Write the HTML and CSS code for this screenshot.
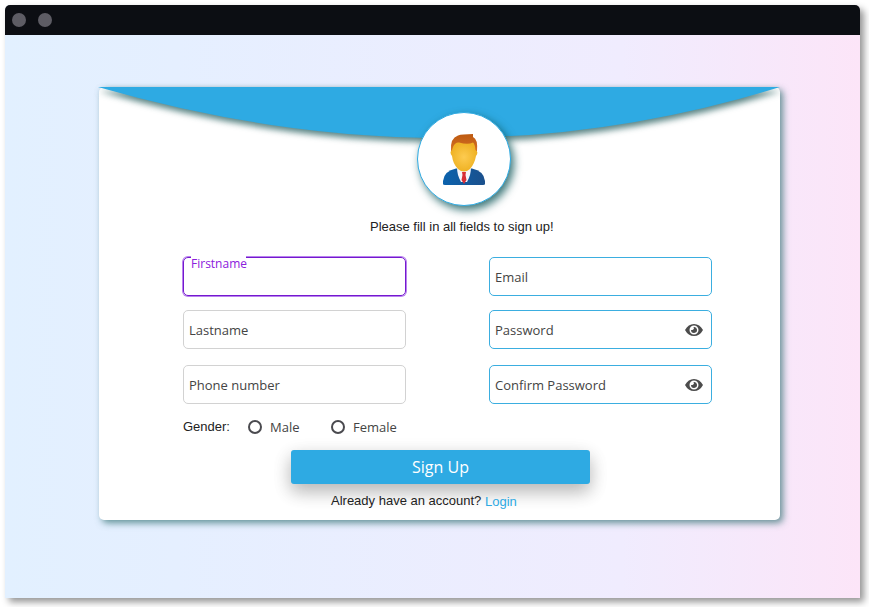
FILE: index.html
```
<!DOCTYPE html>
<html lang="en">
<head>
<meta charset="utf-8">
<title>Sign Up</title>
<link rel="stylesheet" href="styles.css">
</head>
<body>
<div class="window">
  <div class="titlebar"><span class="dot"></span><span class="dot"></span></div>
  <main class="stage">
    <section class="card">
      <svg class="banner" viewBox="0 0 682 60"><path d="M0 0H682Q354 102 0 0Z" fill="#2eaae3"/></svg>
      <div class="avatar">
        <svg viewBox="0 0 44 52" width="44" height="52">
          <defs>
            <radialGradient id="face"><stop offset="0" stop-color="#fdcb50"/><stop offset="1" stop-color="#efb224"/></radialGradient>
            <linearGradient id="suit"><stop offset="0" stop-color="#0b62ad"/><stop offset="1" stop-color="#1b508c"/></linearGradient>
            <linearGradient id="hair" x2="0" y2="1"><stop offset="0" stop-color="#bd5a10"/><stop offset="1" stop-color="#d8732a"/></linearGradient>
          </defs>
          <path d="M1 51V48Q2 38 14 35.500H30Q42 38 43 48V51Q43 52 41 52H3Q1 52 1 51Z" fill="url(#suit)"/>
          <path d="M15 34.500Q15 42 19 49H25Q29 42 29 34.500Z" fill="#f5f5fb"/>
          <path d="M20 39H24L23.500 42L24.500 47L22 51L19.500 47L20.500 42Z" fill="#d72d35"/>
          <path d="M9 18Q8 5 16 2.500Q20 1 31 1L31 4Q36 6 35 18L33 21H11Z" fill="url(#hair)"/>
          <path d="M11 14Q13 9 17 9.500Q26 12 31 9.500Q33 11 33.500 17Q37 19 34 23Q32.500 31 28 36Q22 41 16 36Q11 31 10 23Q7 19 10 17Z" fill="url(#face)"/>
        </svg>
      </div>
      <p class="intro">Please fill in all fields to sign up!</p>
      <form class="form">
        <div class="fields">
          <div class="column">
            <div class="field gray focused"><label>Firstname</label></div>
            <div class="field gray"><label>Lastname</label></div>
            <div class="field gray last"><label>Phone number</label></div>
          </div>
          <div class="column">
            <div class="field"><label>Email</label></div>
            <div class="field"><label>Password</label>
              <svg class="eye" viewBox="0 0 18 12"><path fill-rule="evenodd" d="M0 6Q3.200 0 9 0T18 6Q14.800 12 9 12T0 6ZM9 1.500A4.500 4.500 0 1 0 9 10.500A4.500 4.500 0 1 0 9 1.500ZM8.500 3A3 3 0 1 1 6 6Q7 6.400 8.300 5.500T8.500 3Z"/></svg>
            </div>
            <div class="field last"><label>Confirm Password</label>
              <svg class="eye" viewBox="0 0 18 12"><path fill-rule="evenodd" d="M0 6Q3.200 0 9 0T18 6Q14.800 12 9 12T0 6ZM9 1.500A4.500 4.500 0 1 0 9 10.500A4.500 4.500 0 1 0 9 1.500ZM8.500 3A3 3 0 1 1 6 6Q7 6.400 8.300 5.500T8.500 3Z"/></svg>
            </div>
          </div>
        </div>
        <div class="gender">
          <span class="caption">Gender:</span>
          <span class="option male"><i class="radio"></i>Male</span>
          <span class="option"><i class="radio"></i>Female</span>
        </div>
        <button class="submit" type="button">Sign Up</button>
        <p class="account">Already have an account? <a>Login</a></p>
      </form>
    </section>
  </main>
</div>
</body>
</html>
```
FILE: styles.css
```
* { box-sizing: border-box; }
body { margin: 0; padding: 5px; height: 607px; overflow: hidden; background: #fff; font: 13px "Liberation Sans", Arial, sans-serif; color: #222; }
.window { width: 855px; height: 593px; border-radius: 5px 5px 0 0; box-shadow: 4px 4px 7px rgba(0,0,0,.42); background: linear-gradient(90deg, #e2f0ff, #e5efff 20%, #f0ecfe 72%, #fce5f8); }
.titlebar { height: 30px; background: #0c0e13; border-radius: 5px 5px 0 0; display: flex; align-items: center; gap: 12px; padding-left: 7px; }
.dot { width: 14px; height: 14px; border-radius: 50%; background: #5d5c64; }
.stage { padding: 52px 80px 0 94px; }
.card { width: 681px; height: 433px; background: #fff; border-radius: 5px; box-shadow: 3px 3px 7px rgba(47,111,112,.72); display: flex; flex-direction: column; position: relative; }
.banner { position: absolute; left: -1px; top: 0; width: 682px; height: 60px; overflow: visible; filter: drop-shadow(1px 4px 3px rgba(18,80,80,.7)); }
.avatar { position: relative; width: 94px; height: 94px; margin: 25px 0 0 318px; border: 1px solid #2eaae3; border-radius: 50%; background: #fff; box-shadow: 3px 4px 8px rgba(12,85,87,.8); display: flex; align-items: center; justify-content: center; }
.intro { margin: 13px 0 0 271px; height: 15px; line-height: 15px; white-space: nowrap; }
.form { margin: 23px 67px 0 84px; display: flex; flex-direction: column; }
.fields { display: flex; gap: 83px; }
.column { width: 223px; display: flex; flex-direction: column; gap: 14px; }
.field { height: 39px; border: 1px solid #3baee0; border-radius: 5px; padding: 0 8px 0 5px; display: flex; align-items: center; justify-content: space-between; font: 13px "Open Sans", sans-serif; color: #444; }
.field.gray { border-color: #d2d2d2; }
.field.last { margin-top: 2px; }
.field.focused { position: relative; border-color: #7419cf; box-shadow: 0 0 0 1px #b981ee; }
.field.focused label { position: absolute; left: 7px; top: -3px; height: 18px; line-height: 18px; background: #fff; color: #8b20dc; font-size: 12px; width: 55px; }
.eye { width: 18px; height: 12px; fill: #4c4c4c; }
.gender { display: flex; align-items: center; height: 20px; margin-top: 13px; }
.caption { width: 65px; padding-bottom: 2px; }
.option { display: flex; align-items: center; gap: 8px; font: 13px "Open Sans", sans-serif; color: #444; }
.male { width: 83px; }
.radio { width: 14px; height: 14px; border: 2px solid #4a4a4f; border-radius: 50%; }
.submit { width: 299px; height: 34px; margin: 13px 0 0 108px; padding: 0; border: 0; border-radius: 3px; background: #2eaae3; color: #fff; font: 16px "Open Sans", sans-serif; box-shadow: 0 8px 17px rgba(0,0,0,.2), 0 6px 20px rgba(0,0,0,.12); }
.account { position: relative; margin: 9px 0 0 148px; line-height: 15px; white-space: nowrap; }
.account a { color: #2eaae3; position: relative; top: 1px; }
```
